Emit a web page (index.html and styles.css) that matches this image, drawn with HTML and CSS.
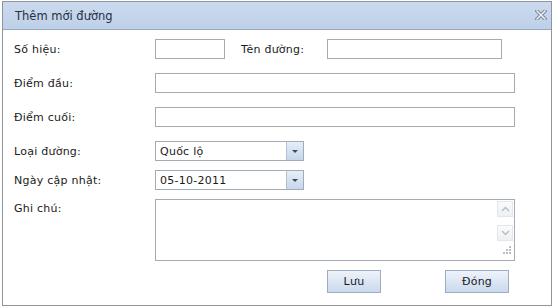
FILE: index.html
```html
<!DOCTYPE html>
<html lang="vi">
	<head>
		<meta charset="UTF-8" />
		<title>Thêm mới đường</title>
		<link rel="stylesheet" href="styles.css">
	</head>
	<body>
		<div class="dialog">
			<div class="titlebar">
				<span class="title">Thêm mới đường</span>
				<span class="close">
					<svg width="12" height="10" viewBox="0 0 12 10">
						<path d="M2 1 L10 9 M10 1 L2 9" stroke="#7d8b9c" stroke-width="3.6" stroke-linecap="square" />
						<path d="M2 1 L10 9 M10 1 L2 9" stroke="#f2f5f9" stroke-width="1.4" stroke-linecap="square" />
					</svg>
				</span>
			</div>
			<div class="form">
				<div class="row">
					<label class="label">Số hiệu:</label>
					<div class="field short"></div>
					<label class="label inline">Tên đường:</label>
					<div class="field medium"></div>
				</div>
				<div class="row">
					<label class="label">Điểm đầu:</label>
					<div class="field long"></div>
				</div>
				<div class="row">
					<label class="label">Điểm cuối:</label>
					<div class="field long"></div>
				</div>
				<div class="row">
					<label class="label">Loại đường:</label>
					<div class="combo">
						<span class="combo-text">Quốc lộ</span>
						<span class="combo-btn"><span class="arrow"></span></span>
					</div>
				</div>
				<div class="row tight">
					<label class="label">Ngày cập nhật:</label>
					<div class="combo">
						<span class="combo-text">05-10-2011</span>
						<span class="combo-btn"><span class="arrow"></span></span>
					</div>
				</div>
				<div class="row tight note">
					<label class="label">Ghi chú:</label>
					<div class="textarea">
						<div class="scroll">
							<span class="sbtn">
								<svg width="9" height="6" viewBox="0 0 9 6"><path d="M1 5 L4.5 1.5 L8 5" fill="none" stroke="#b4bcc4" stroke-width="1.3" /></svg>
							</span>
							<span class="sbtn">
								<svg width="9" height="6" viewBox="0 0 9 6"><path d="M1 1 L4.5 4.5 L8 1" fill="none" stroke="#b4bcc4" stroke-width="1.3" /></svg>
							</span>
							<span class="grip">
								<svg width="8" height="8" viewBox="0 0 8 8" fill="#b9bfc6">
									<rect x="6" y="0" width="2" height="2" />
									<rect x="3" y="3" width="2" height="2" />
									<rect x="6" y="3" width="2" height="2" />
									<rect x="0" y="6" width="2" height="2" />
									<rect x="3" y="6" width="2" height="2" />
									<rect x="6" y="6" width="2" height="2" />
								</svg>
							</span>
						</div>
					</div>
				</div>
				<div class="buttons">
					<button class="btn save">Lưu</button>
					<button class="btn close-btn">Đóng</button>
				</div>
			</div>
		</div>
	</body>
</html>
```

FILE: styles.css
```css
* {
	box-sizing: border-box;
	font-family: "DejaVu Sans", Verdana, sans-serif;
	font-size: 11px;
}
body {
	margin: 0;
	background: #ffffff;
}
.dialog {
	width: 550px;
	height: 305px;
	margin: 1px 0 0 2px;
	border: 1px solid #8f959c;
	background: #ffffff;
	display: flex;
	flex-direction: column;
}
.titlebar {
	height: 28px;
	padding: 0 3px 0 12px;
	display: flex;
	align-items: center;
	justify-content: space-between;
	background: linear-gradient(#cbdaee, #bed0e9);
	border-bottom: 1px solid #99a7b8;
}
.title {
	color: #253040;
	font-size: 11.5px;
}
.close {
	display: flex;
	width: 14px;
	height: 12px;
	align-items: center;
	justify-content: center;
	margin-top: -2px;
}
.form {
	padding: 9px 0 0 11px;
	display: flex;
	flex-direction: column;
}
.row {
	display: flex;
	align-items: center;
	height: 20px;
	margin-bottom: 14px;
}
.row.tight {
	margin-top: -5px;
}
.row.note {
	height: 62px;
	align-items: flex-start;
}
.label {
	width: 141px;
	color: #1a1a1a;
	letter-spacing: 0.25px;
}
.label.inline {
	width: 86px;
	margin-left: 16px;
}
.note .label {
	padding-top: 3px;
}
.field {
	height: 20px;
	border: 1px solid #a3abb5;
	background: #ffffff;
}
.field.short {
	width: 70px;
}
.field.medium {
	width: 175px;
}
.field.long {
	width: 360px;
}
.combo {
	width: 149px;
	height: 20px;
	border: 1px solid #a3abb5;
	display: flex;
}
.combo-text {
	flex: 1;
	padding: 3px 0 0 4px;
	color: #1a1a1a;
	letter-spacing: 0.25px;
}
.combo-btn {
	width: 17px;
	border-left: 1px solid #b3c1d3;
	background: linear-gradient(#e6eef8, #c6d6eb);
	display: flex;
	align-items: center;
	justify-content: center;
}
.arrow {
	width: 0;
	height: 0;
	border-left: 3px solid transparent;
	border-right: 3px solid transparent;
	border-top: 3px solid #3d4a5a;
}
.textarea {
	width: 360px;
	height: 62px;
	border: 1px solid #a3abb5;
	display: flex;
	justify-content: flex-end;
}
.scroll {
	width: 17px;
	padding: 1px 1px 1px 0;
	display: flex;
	flex-direction: column;
	align-items: center;
}
.sbtn {
	width: 16px;
	height: 16px;
	margin-bottom: 8px;
	border: 1px solid #e3e6ea;
	background: linear-gradient(#fbfbfc, #eef0f2);
	display: flex;
	align-items: center;
	justify-content: center;
}
.grip {
	margin-top: -3px;
	align-self: flex-end;
	margin-right: 2px;
	display: flex;
}
.buttons {
	display: flex;
	padding-left: 313px;
	margin-top: -5px;
}
.btn {
	height: 23px;
	border: 1px solid #9dacbf;
	background: linear-gradient(#eef3fa, #c9d9ee);
	color: #1a1a1a;
	padding: 0;
	letter-spacing: 0.25px;
	cursor: pointer;
}
.btn.save {
	width: 54px;
}
.btn.close-btn {
	width: 64px;
	margin-left: 64px;
}
```
